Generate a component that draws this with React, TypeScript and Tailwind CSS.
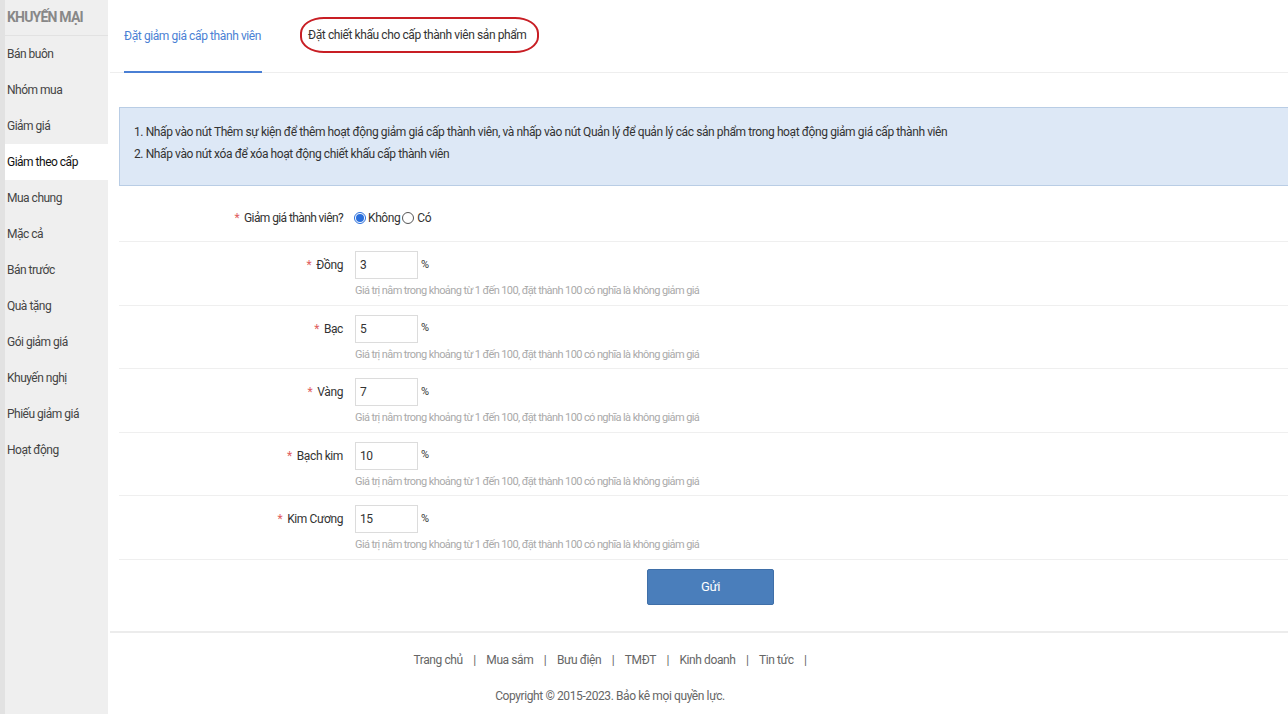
import React from "react";

const menu = [
  "Bán buôn",
  "Nhóm mua",
  "Giảm giá",
  "Giảm theo cấp",
  "Mua chung",
  "Mặc cả",
  "Bán trước",
  "Quà tặng",
  "Gói giảm giá",
  "Khuyến nghị",
  "Phiếu giảm giá",
  "Hoạt động",
];

const tiers = [
  { name: "Đồng", v: "3" },
  { name: "Bạc", v: "5" },
  { name: "Vàng", v: "7" },
  { name: "Bạch kim", v: "10" },
  { name: "Kim Cương", v: "15" },
];

const links = ["Trang chủ", "Mua sắm", "Bưu điện", "TMĐT", "Kinh doanh", "Tin tức"];

export default function App() {
  return (
    <div
      className="flex w-[1288px] h-[714px] overflow-hidden bg-white text-[#333] text-[12px] tracking-[-0.4px]"
      style={{ fontFamily: "Roboto, 'Liberation Sans', sans-serif" }}
    >
      {/* Sidebar */}
      <aside className="flex w-[110px] shrink-0 bg-white">
        <div className="w-[5px] bg-[#e2e2e2]" />
        <div className="w-[103px] bg-[#efefef] flex flex-col">
          <div className="h-[36px] flex items-center pl-[2px] text-[14px] font-bold text-[#888] tracking-[-0.8px] border-b border-[#e2e2e2]">
            KHUYẾN MẠI
          </div>
          {menu.map((m) => (
            <div
              key={m}
              className={
                "h-[36px] flex items-center pl-[2px] text-[12px] tracking-[-0.5px] " +
                (m === "Giảm theo cấp" ? "bg-white text-[#111]" : "text-[#444]")
              }
            >
              {m}
            </div>
          ))}
        </div>
      </aside>

      {/* Main */}
      <main className="flex-1 flex flex-col min-w-0">
        {/* Tabs */}
        <div className="h-[73px] flex items-stretch border-b border-[#eeeeee] pl-[14px] shrink-0">
          <div className="flex items-center w-[138px] whitespace-nowrap text-[#4a7fd4] border-b-2 border-[#4a7fd4] -mb-px">
            Đặt giảm giá cấp thành viên
          </div>
          <div className="flex items-center ml-[38px]">
            <div className="h-[36px] w-[239px] mb-[2px] flex items-center whitespace-nowrap pl-[6px] border-2 border-[#c81e24] rounded-[24px/16px] text-[#333]">
              Đặt chiết khấu cho cấp thành viên sản phẩm
            </div>
          </div>
        </div>

        {/* Content */}
        <div className="w-[1192px] pl-[9px] pt-[34px] shrink-0">
          <div className="h-[79px] bg-[#dde8f6] border border-[#b9cde5] flex flex-col gap-[4px] pt-[15px] pl-[14px] leading-[18px] text-[#333]">
            <div className="whitespace-nowrap">
              1. Nhấp vào nút Thêm sự kiện để thêm hoạt động giảm giá cấp thành viên, và nhấp vào nút Quản lý để quản lý các sản phẩm trong hoạt động giảm giá cấp thành viên
            </div>
            <div>2. Nhấp vào nút xóa để xóa hoạt động chiết khấu cấp thành viên</div>
          </div>

          <div className="mt-[8px]">
            <div className="h-[48px] flex items-center border-b border-[#efefef]">
              <div className="w-[225px] text-right pr-[1px] tracking-[-0.6px]">
                <span className="text-[#e06060] mr-[5px]">*</span>Giảm giá thành viên?
              </div>
              <div className="ml-[10px] flex items-center">
                <span className="w-[12px] h-[12px] rounded-full border border-[#2a6fdc] flex items-center justify-center">
                  <span className="w-[8px] h-[8px] rounded-full bg-[#2a6fdc]" />
                </span>
                <span className="ml-[2px]">Không</span>
                <span className="w-[12px] h-[12px] rounded-full border border-[#555] ml-[2px]" />
                <span className="ml-[3px]">Có</span>
              </div>
            </div>

            {tiers.map((t) => (
              <div key={t.name} className="h-[63.5px] flex border-b border-[#efefef] pt-[9px]">
                <div className="w-[225px] h-[28px] flex items-center justify-end pr-[1px]">
                  <span className="text-[#e06060] mr-[5px]">*</span>
                  {t.name}
                </div>
                <div className="ml-[11px] flex flex-col">
                  <div className="flex items-center">
                    <div className="w-[63px] h-[28px] border border-[#dcdcdc] flex items-center pl-[4px]">
                      {t.v}
                    </div>
                    <span className="ml-[3px] text-[11px]">%</span>
                  </div>
                  <div className="mt-[4px] text-[11px] tracking-[-0.6px] text-[#aaaaaa] whitespace-nowrap">
                    Giá trị nằm trong khoảng từ 1 đến 100, đặt thành 100 có nghĩa là không giảm giá
                  </div>
                </div>
              </div>
            ))}

            <div className="flex justify-center pt-[9px] pb-[26px]">
              <button className="w-[127px] h-[36px] bg-[#4a7ebb] border border-[#3f6fa8] rounded-[2px] text-white text-[13px]">
                Gửi
              </button>
            </div>
          </div>
        </div>

        {/* Footer */}
        <footer className="border-t-2 border-[#ececec] shrink-0">
          <div className="w-[1000px] flex flex-col items-center text-[#666]">
            <div className="flex items-center mt-[18px] gap-[10.5px] text-[12px]">
              {links.map((l) => (
                <React.Fragment key={l}>
                  <span>{l}</span>
                  <span>|</span>
                </React.Fragment>
              ))}
            </div>
            <div className="mt-[18px] text-[12px]">Copyright © 2015-2023. Bảo kê mọi quyền lực.</div>
          </div>
        </footer>
      </main>
    </div>
  );
}
